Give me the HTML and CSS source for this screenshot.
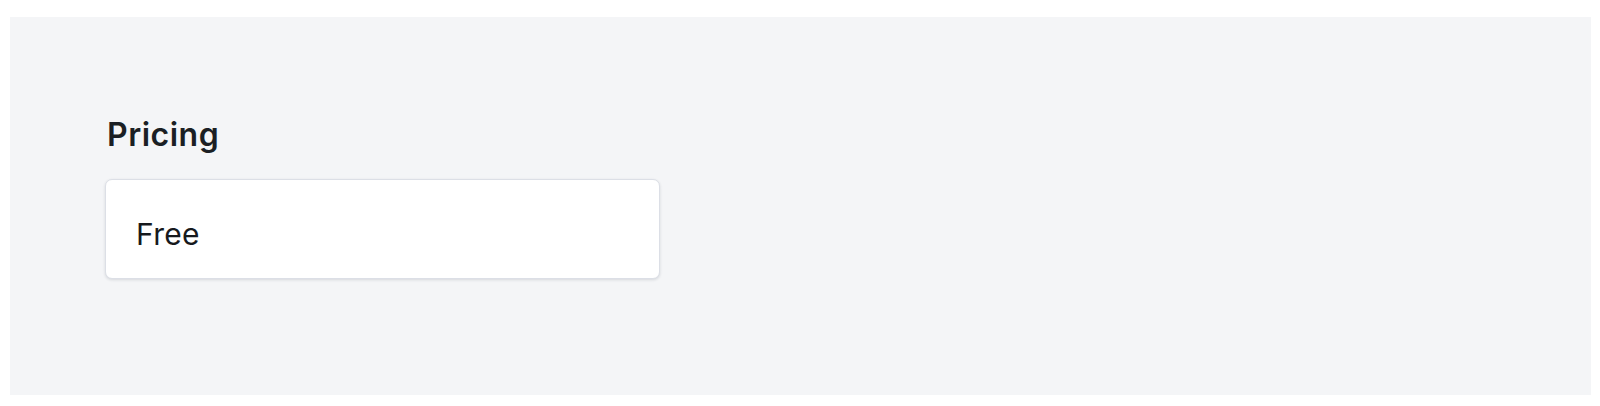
FILE: index.html
```html
<!DOCTYPE html>
<html lang="en">
<head>
    <meta charset="UTF-8">
    <meta name="viewport" content="width=device-width, initial-scale=1.0">
    <title>Pricing</title>
    <link rel="stylesheet" href="styles.css">
</head>
<body>
    <div class="panel">
        <div class="field">
            <h2 class="field-label">Pricing</h2>
            <div class="field-value">Free</div>
        </div>
    </div>
</body>
</html>
```

FILE: styles.css
```css
body {
    margin: 0;
    padding: 17px 9px 11px 10px;
    background: #ffffff;
    font-family: Inter, "Noto Sans", sans-serif;
}

.panel {
    height: 378px;
    box-sizing: border-box;
    background-color: #f4f5f7;
    padding: 98px 95px 0;
}

.field {
    width: 555px;
}

.field-label {
    margin: 0 0 24px;
    padding-left: 2px;
    font-size: 32px;
    line-height: 40px;
    font-weight: 600;
    letter-spacing: 0.5px;
    color: #1b1f24;
}

.field-value {
    height: 100px;
    box-sizing: border-box;
    padding: 36px 30px 0;
    background-color: #ffffff;
    border: 1px solid #dcdfe6;
    border-radius: 7px;
    box-shadow: 0 1px 3px rgba(30, 40, 60, 0.14);
    font-size: 30px;
    line-height: 36px;
    letter-spacing: 0.3px;
    color: #16191d;
}
```
